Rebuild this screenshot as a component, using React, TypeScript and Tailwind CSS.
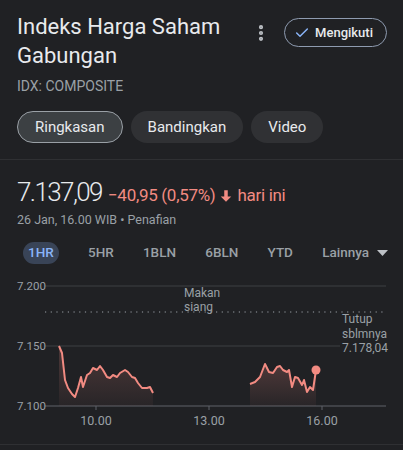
import { MoreVertical, Check } from "lucide-react";

const seg1: [number, number][] = [
  [59, 346], [62, 353], [65, 380], [68, 388], [72, 394], [75, 397], [78, 388], [81, 377],
  [83, 387], [87, 375], [90, 373], [93, 368], [97, 370], [100, 366], [103, 370], [107, 377],
  [110, 378], [113, 375], [117, 377], [120, 373], [125, 370], [128, 372], [132, 377],
  [135, 378], [138, 383], [142, 388], [147, 388], [150, 387], [153, 393],
];

const seg2: [number, number][] = [
  [250, 384], [255, 382], [260, 377], [265, 364], [269, 372], [273, 373], [277, 367],
  [280, 366], [283, 370], [287, 372], [289, 370], [292, 387], [295, 377], [298, 378],
  [302, 385], [304, 380], [307, 392], [310, 387], [313, 390], [316, 370],
];

// chart svg starts at page y=272
const OFF = 272;

const toLine = (pts: [number, number][]) =>
  pts.map(([x, y], i) => `${i ? "L" : "M"}${x} ${y - OFF}`).join(" ");

const toArea = (pts: [number, number][]) =>
  `${toLine(pts)} L${pts[pts.length - 1][0]} ${406 - OFF} L${pts[0][0]} ${406 - OFF} Z`;

const ranges = ["5HR", "1BLN", "6BLN", "YTD"];

function Chart() {
  const gray = "#9aa0a6";
  const font = "Roboto, 'Liberation Sans', sans-serif";
  return (
    <svg width="403" height="172" viewBox="0 0 403 172" className="block">
      <defs>
        <linearGradient id="fill" x1="0" y1="0" x2="0" y2="1">
          <stop offset="0%" stopColor="#f28b82" stopOpacity="0.22" />
          <stop offset="100%" stopColor="#f28b82" stopOpacity="0.04" />
        </linearGradient>
      </defs>
      {/* grid */}
      <line x1="45" x2="386" y1={286 - OFF} y2={286 - OFF} stroke="#3c4043" strokeWidth="1" />
      <line x1="45" x2="340" y1={346 - OFF} y2={346 - OFF} stroke="#3c4043" strokeWidth="1" />
      <line x1="45" x2="386" y1={406 - OFF} y2={406 - OFF} stroke="#5f6368" strokeWidth="1" />
      <line x1="45" x2="386" y1={312 - OFF} y2={312 - OFF} stroke="#9aa0a6" strokeWidth="1.2" strokeDasharray="1.2 4.5" />
      {[96, 209, 322].map((x) => (
        <line key={x} x1={x} x2={x} y1={406 - OFF} y2={410 - OFF} stroke="#5f6368" />
      ))}
      <g fontFamily={font} fontSize="11.5" fill={gray}>
        <text x="17" y={290 - OFF}>7.200</text>
        <text x="17" y={350 - OFF}>7.150</text>
        <text x="17" y={410 - OFF}>7.100</text>
        <text x="96" y={425 - OFF} textAnchor="middle" fontSize="12.5">10.00</text>
        <text x="209" y={425 - OFF} textAnchor="middle" fontSize="12.5">13.00</text>
        <text x="322" y={425 - OFF} textAnchor="middle" fontSize="12.5">16.00</text>
        <text x="184" y={297 - OFF} fontSize="12">Makan</text>
        <text x="184" y={311 - OFF} fontSize="12">siang</text>
        <text x="342" y={323 - OFF} fontSize="12">Tutup</text>
        <text x="342" y={338 - OFF} fontSize="12">sblmnya</text>
        <text x="342" y={352 - OFF} fontSize="12">7.178,04</text>
      </g>
      <path d={toArea(seg1)} fill="url(#fill)" />
      <path d={toArea(seg2)} fill="url(#fill)" />
      <path d={toLine(seg1)} fill="none" stroke="#f28b82" strokeWidth="2" strokeLinejoin="round" />
      <path d={toLine(seg2)} fill="none" stroke="#f28b82" strokeWidth="2" strokeLinejoin="round" />
      <circle cx="316" cy={370 - OFF} r="4.5" fill="#f28b82" />
    </svg>
  );
}

export default function App() {
  return (
    <div className="w-[403px] h-[450px] overflow-hidden bg-[#202124] text-[#e8eaed] font-['Roboto','Liberation_Sans',sans-serif]">
      {/* header */}
      <div className="px-[17px] pt-[12px]">
        <div className="flex items-start justify-between">
          <h1 className="text-[22px] leading-[29px] font-normal text-[#e8eaed]">
            Indeks Harga Saham
            <br />
            Gabungan
          </h1>
          <div className="flex items-center pt-[6px] -mr-px">
            <MoreVertical size={20} strokeWidth={3} className="text-[#bdc1c6] mr-[13px]" />
            <button className="flex items-center gap-[5px] h-[29px] rounded-full border border-[#8e9bb0] pl-[9px] pr-[13px] text-[13px] font-medium text-[#e8eaed]">
              <Check size={16} strokeWidth={2.2} className="text-[#8ab4f8]" />
              Mengikuti
            </button>
          </div>
        </div>
        <div className="mt-[6px] text-[14px] leading-[20px] text-[#9aa0a6]">IDX: COMPOSITE</div>
        <div className="mt-[15px] flex gap-[8px]">
          <span className="h-[32px] flex items-center px-[17px] rounded-full bg-[#3c4043] border border-[#9aa0a6] text-[15px] text-[#e8eaed]">
            Ringkasan
          </span>
          <span className="h-[32px] flex items-center px-[17px] rounded-full bg-[#303134] text-[15px] text-[#e8eaed]">
            Bandingkan
          </span>
          <span className="h-[32px] flex items-center px-[17px] rounded-full bg-[#303134] text-[15px] text-[#e8eaed]">
            Video
          </span>
        </div>
      </div>
      <div className="mt-[16px] h-px bg-[#2f3033]" />

      {/* price */}
      <div className="px-[17px] pt-[17px]">
        <div className="flex items-baseline gap-[6px]">
          <span className="text-[26px] leading-[30px] font-light tracking-[-1.6px] text-[#e8eaed]">7.137,09</span>
          <span className="flex items-baseline text-[17px] tracking-[-0.3px] text-[#f28b82]">
            −40,95 (0,57%)
            <svg width="14" height="14" viewBox="0 0 24 24" className="mx-[4px] self-center">
              <path d="M12 22 3 13h6V2h6v11h6z" fill="#f28b82" />
            </svg>
            hari ini
          </span>
        </div>
        <div className="mt-[2px] text-[12.5px] leading-[17px] text-[#9aa0a6]">
          26 Jan, 16.00 WIB • Penafian
        </div>
      </div>

      {/* range tabs */}
      <div className="mt-[14px] flex items-center justify-between pl-[23px] pr-[15px] text-[13.5px] font-medium text-[#9aa0a6]">
        <span className="h-[22px] flex items-center px-[5px] rounded-full bg-[#394457] text-[#8ab4f8]">1HR</span>
        {ranges.map((r) => (
          <span key={r}>{r}</span>
        ))}
        <span className="flex items-center gap-[8px]">
          Lainnya
          <svg width="11" height="6" viewBox="0 0 11 6">
            <path d="M0 0h11L5.5 6z" fill="#bdc1c6" />
          </svg>
        </span>
      </div>

      <div className="mt-[8px]">
        <Chart />
      </div>
      <div className="h-px bg-[#2f3033]" />
    </div>
  );
}
